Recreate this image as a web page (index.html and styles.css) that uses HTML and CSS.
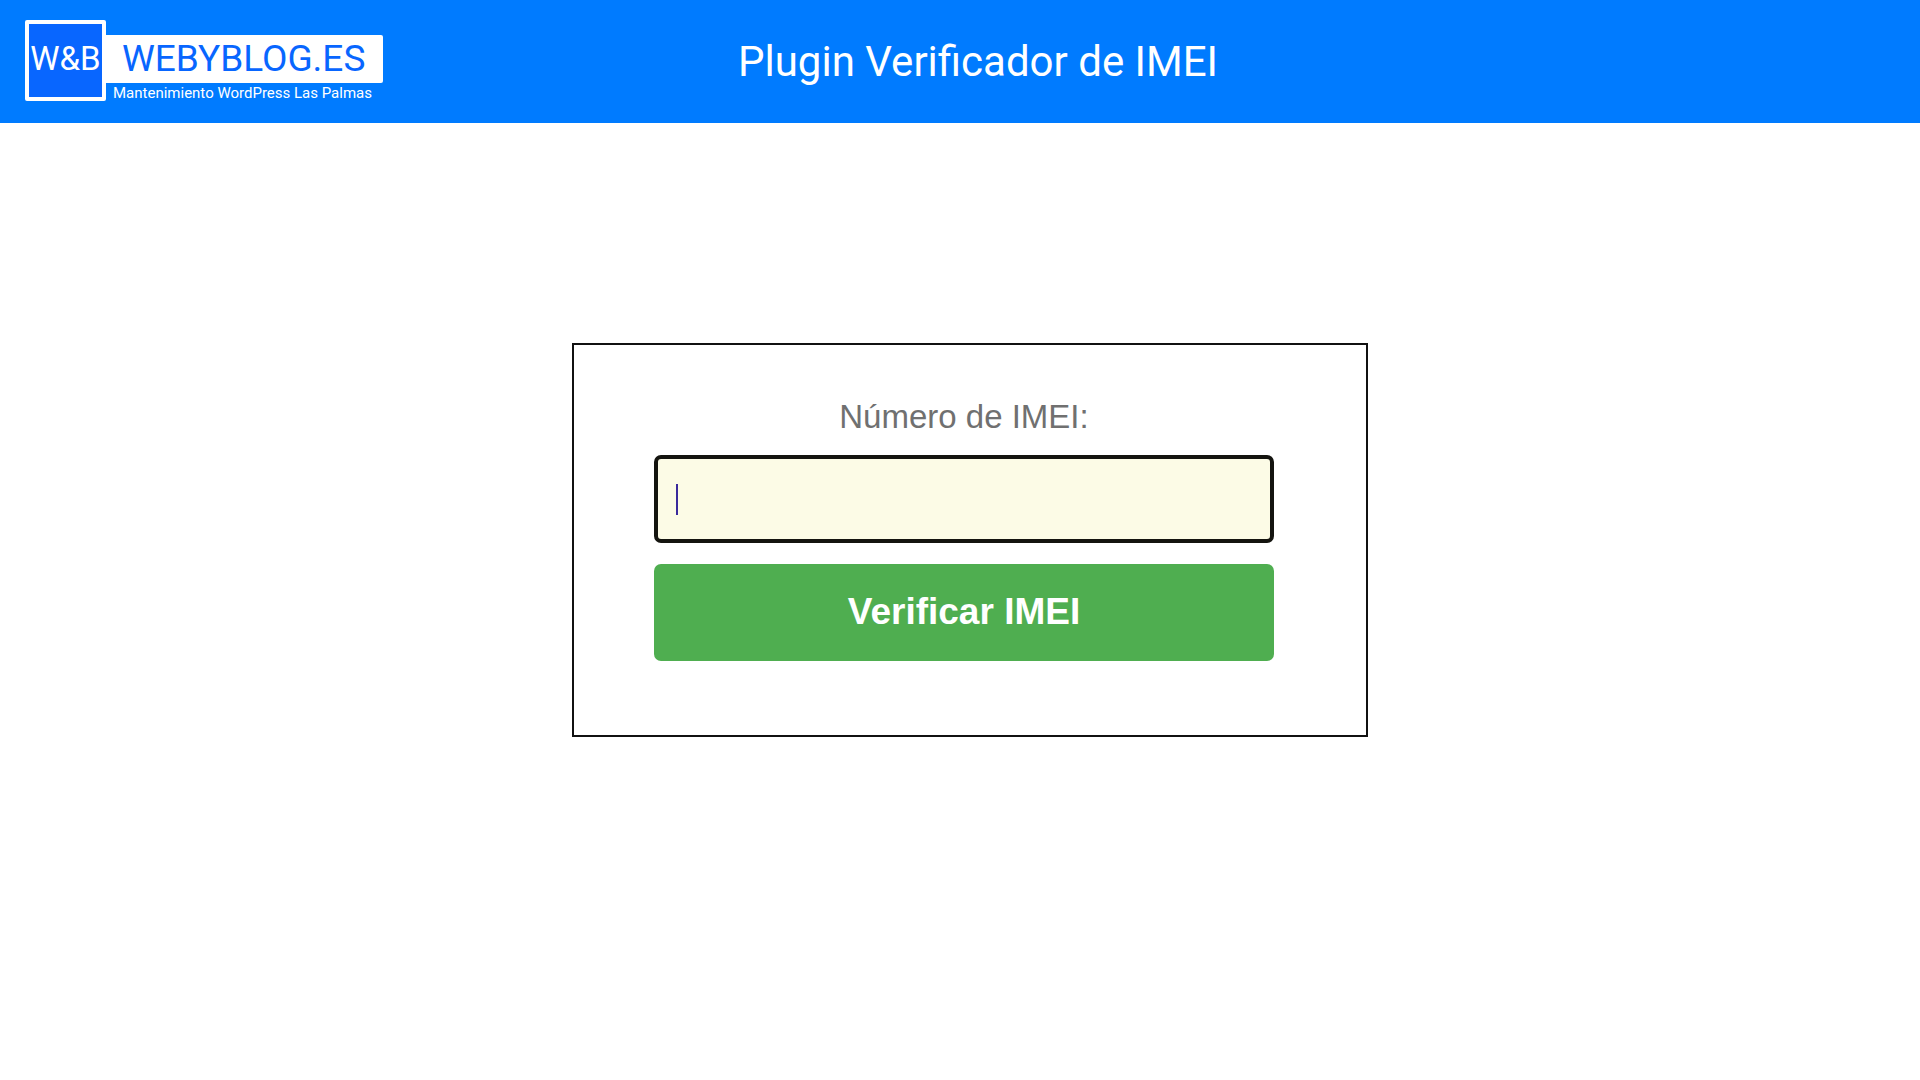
FILE: index.html
```html
<!DOCTYPE html>
<html lang="es">
<head>
    <meta charset="UTF-8">
    <meta name="viewport" content="width=device-width, initial-scale=1.0">
    <title>Plugin Verificador de IMEI</title>
    <link rel="stylesheet" href="styles.css">
</head>
<body>
    <header class="cabecera">
        <a class="logo" href="#">
            <span class="logo-cuadro">W&amp;B</span>
            <span class="logo-texto">
                <span class="logo-nombre">WEBYBLOG.ES</span>
                <span class="logo-lema">Mantenimiento WordPress Las Palmas</span>
            </span>
        </a>
        <h1>Plugin Verificador de IMEI</h1>
    </header>
    <main class="contenido">
        <form class="verificador" onsubmit="return false">
            <label for="imei">Número de IMEI:</label>
            <input type="text" id="imei" name="imei" inputmode="numeric" maxlength="15">
            <button type="submit">Verificar IMEI</button>
        </form>
    </main>
</body>
</html>
```
FILE: styles.css
```css
* {
    box-sizing: border-box;
}
body {
    margin: 0;
    background-color: #fff;
    font-family: "Liberation Sans", Arial, sans-serif;
}
.cabecera {
    display: grid;
    grid-template-columns: 1fr auto 1fr;
    align-items: center;
    padding: 20px 0 20px 36px;
    background-color: #007bff;
    color: #fff;
    font-family: Roboto, sans-serif;
}
.cabecera h1 {
    margin: 0;
    font-size: 42px;
    line-height: 48px;
    font-weight: 400;
}
.logo {
    display: flex;
    align-items: flex-start;
    margin-left: -11px;
    color: #fff;
    text-decoration: none;
    white-space: nowrap;
}
.logo-cuadro {
    display: flex;
    align-items: center;
    justify-content: center;
    width: 81px;
    height: 81px;
    padding-bottom: 4px;
    border: 4px solid #fff;
    border-radius: 2px;
    background-color: #0866ff;
    font-size: 33px;
}
.logo-texto {
    display: flex;
    flex-direction: column;
    padding-top: 15px;
}
.logo-nombre {
    padding: 0 18px 0 16px;
    border-radius: 0 2px 2px 0;
    background-color: #fff;
    color: #0866ff;
    font-size: 37px;
    line-height: 48px;
}
.logo-lema {
    padding-left: 7px;
    font-size: 15px;
    line-height: 20px;
}
.contenido {
    display: flex;
    justify-content: center;
    padding: 220px 0 40px 20px;
}
.verificador {
    display: flex;
    flex-direction: column;
    width: 100%;
    max-width: 796px;
    padding: 52px 92px 74px 80px;
    border: 2px solid #111;
}
.verificador label {
    margin-bottom: 18px;
    color: #707070;
    font-size: 33px;
    line-height: 40px;
    text-align: center;
}
.verificador input {
    width: 100%;
    height: 88px;
    margin-bottom: 21px;
    padding: 0 18px;
    border: 4px solid #14140f;
    border-radius: 7px;
    outline: none;
    background: #fcfbe6 linear-gradient(#3a2a9c, #3a2a9c) 18px center / 2px 31px no-repeat;
    font-size: 33px;
}
.verificador input:focus {
    background-image: none;
    caret-color: #3a2a9c;
}
.verificador button {
    height: 97px;
    padding: 0 20px 2px;
    border: none;
    border-radius: 7px;
    background-color: #4fae50;
    color: #fff;
    font-family: inherit;
    font-size: 37px;
    font-weight: bold;
    cursor: pointer;
}
.verificador button:hover {
    background-color: #45a049;
}
```
